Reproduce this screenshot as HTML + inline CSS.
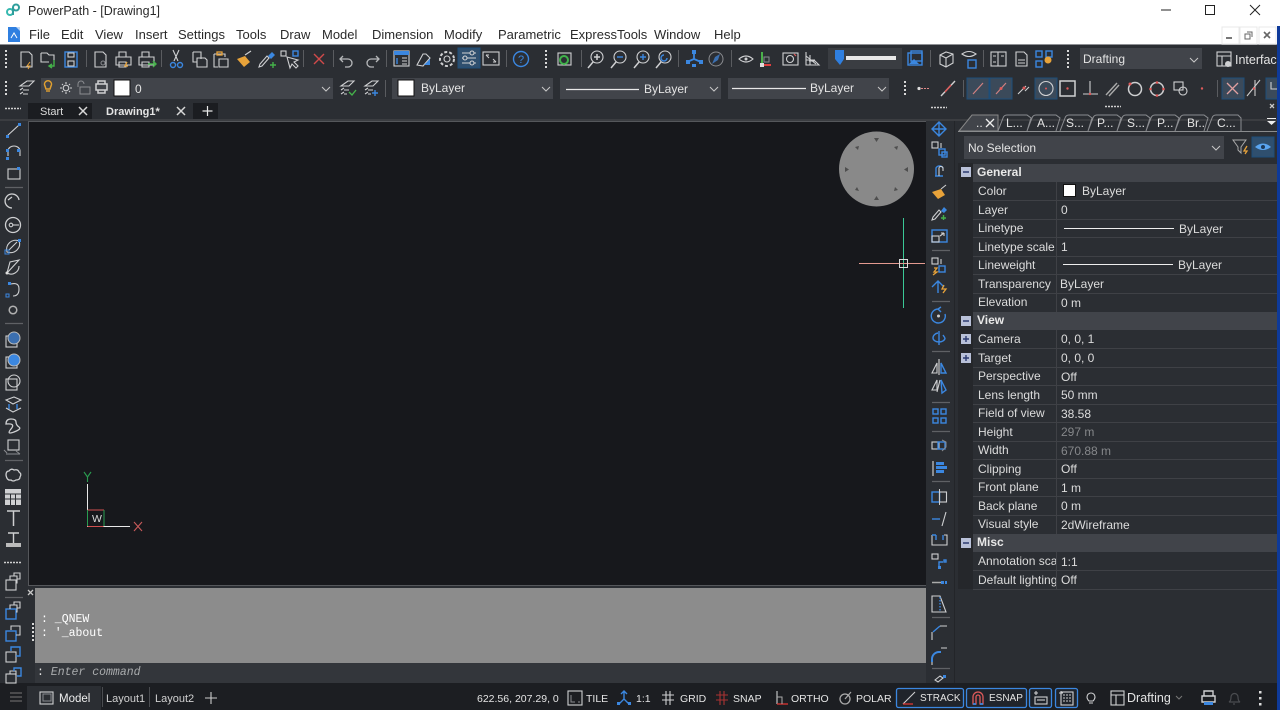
<!DOCTYPE html>
<html><head><meta charset="utf-8"><title>PowerPath</title>
<style>
*{box-sizing:border-box}
html,body{margin:0;padding:0;width:1280px;height:710px;overflow:hidden;background:#2b2e33;font-family:"Liberation Sans","Noto Sans CJK TC",sans-serif}
.a{position:absolute}
.t{position:absolute;white-space:nowrap;font-size:12px;line-height:16px;color:#e4e4e4}
.m{position:absolute;top:27px;font-size:13px;line-height:16px;color:#2a2a2a;white-space:nowrap}
.c{position:absolute;background:#41444a}
.pl{position:absolute;left:978px;margin-top:-1px;font-size:12px;line-height:16px;color:#dcdcdc;white-space:nowrap;width:78px;overflow:hidden}
.pv{position:absolute;left:1061px;font-size:12px;line-height:16px;color:#dcdcdc;white-space:nowrap}
.ph{position:absolute;left:977px;margin-top:-1px;font-size:12px;font-weight:bold;line-height:16px;color:#e8e8e8}
.s{position:absolute;top:692px;font-size:10.500px;line-height:14px;color:#e4e4e4;white-space:nowrap}
svg{position:absolute;left:0;top:0}
.l{fill:none;stroke:#cfd0d2;stroke-width:1.100}
.b{fill:none;stroke:#3b87e0;stroke-width:1.400}
.o{fill:none;stroke:#e8a33a;stroke-width:1.300}
.d{fill:none;stroke:#8a8c90;stroke-width:1}
.r{fill:none;stroke:#e05a5a;stroke-width:1.200}
.g{fill:none;stroke:#45b24a;stroke-width:1.400}
</style></head><body>
<div class="a" style="left:0;top:0;width:1280px;height:44px;background:#fff"></div>
<div class="a" style="left:0;top:44px;width:1280px;height:1px;background:#8e9094"></div>
<div class="a" style="left:0;top:45px;width:1280px;height:76px;background:#2b2e33"></div>
<div class="a" style="left:0;top:119px;width:1280px;height:2px;background:#3b3d41"></div>
<div class="a" style="left:28px;top:121px;width:898px;height:465px;background:#17181c;border:1px solid #55575b;border-right:0"></div>
<div class="a" style="left:35px;top:588px;width:891px;height:75px;background:#8c8c8c"></div>
<div class="a" style="left:35px;top:663px;width:891px;height:20px;background:#33363b"></div>
<div class="a" style="left:954px;top:121px;width:1px;height:562px;background:#232529"></div>
<div class="a" style="left:0;top:683px;width:1280px;height:27px;background:#1c1e22"></div>
<div class="a" style="left:27px;top:686px;width:74px;height:24px;background:#2b2e33"></div>
<div class="a" style="left:102px;top:687px;width:1px;height:20px;background:#4a4c50"></div>
<div class="a" style="left:149px;top:687px;width:1px;height:20px;background:#4a4c50"></div>

<!-- tabs -->
<div class="a" style="left:28px;top:103px;width:64px;height:16px;background:#1b1d21"></div>
<div class="a" style="left:193px;top:103px;width:25px;height:16px;background:#1b1d21"></div>
<div class="t" style="left:40px;top:104px;color:#dcdcdc;font-size:11px">Start</div>
<div class="t" style="left:106px;top:104px;font-weight:bold;font-size:11px;color:#e4e4e4">Drawing1*</div>

<!-- combos -->
<div class="c" style="left:41px;top:78px;width:292px;height:21px"></div>
<div class="c" style="left:392px;top:78px;width:161px;height:21px"></div>
<div class="c" style="left:560px;top:78px;width:161px;height:21px"></div>
<div class="c" style="left:728px;top:78px;width:161px;height:21px"></div>
<div class="c" style="left:1080px;top:48px;width:122px;height:21px"></div>
<div class="c" style="left:828px;top:48px;width:74px;height:21px;background:#3a3d42"></div>
<div class="c" style="left:964px;top:136px;width:260px;height:23px"></div>

<!-- title/menu text -->
<div class="t" style="left:28px;top:3px;color:#2a2a2a;font-size:12.500px">PowerPath - [Drawing1]</div>
<div class="m" style="left:29px">File</div>
<div class="m" style="left:61px">Edit</div>
<div class="m" style="left:95px">View</div>
<div class="m" style="left:135px">Insert</div>
<div class="m" style="left:178px">Settings</div>
<div class="m" style="left:236px">Tools</div>
<div class="m" style="left:280px">Draw</div>
<div class="m" style="left:322px">Model</div>
<div class="m" style="left:372px">Dimension</div>
<div class="m" style="left:444px">Modify</div>
<div class="m" style="left:498px">Parametric</div>
<div class="m" style="left:570px">ExpressTools</div>
<div class="m" style="left:654px">Window</div>
<div class="m" style="left:714px">Help</div>

<!-- toolbar text -->
<div class="t" style="left:135px;top:81px">0</div>
<div class="t" style="left:421px;top:80px">ByLayer</div>
<div class="t" style="left:644px;top:81px">ByLayer</div>
<div class="t" style="left:810px;top:80px">ByLayer</div>
<div class="t" style="left:1083px;top:51px">Drafting</div>
<div class="t" style="left:1235px;top:52px;font-size:12.500px">Interfac</div>
<div class="t" style="left:968px;top:140px">No Selection</div>

<!-- Properties panel -->
<div class="a" style="left:973px;top:163.500px;width:304px;height:18px;background:#41444a"></div>
<div class="a" style="left:973px;top:312px;width:304px;height:18px;background:#41444a"></div>
<div class="a" style="left:973px;top:534px;width:304px;height:18px;background:#41444a"></div>
<div class="a" style="left:958px;top:163px;width:15px;height:426px;background:#25272b"></div>
<div class="a" style="left:1056px;top:182px;width:1px;height:130px;background:#3f4146"></div>
<div class="a" style="left:1056px;top:330px;width:1px;height:204px;background:#3f4146"></div>
<div class="a" style="left:1056px;top:552px;width:1px;height:37px;background:#3f4146"></div>
<div class="a" style="left:973px;top:200px;width:304px;height:1px;background:#3f4146"></div>
<div class="a" style="left:973px;top:219px;width:304px;height:1px;background:#3f4146"></div>
<div class="a" style="left:973px;top:237px;width:304px;height:1px;background:#3f4146"></div>
<div class="a" style="left:973px;top:256px;width:304px;height:1px;background:#3f4146"></div>
<div class="a" style="left:973px;top:274px;width:304px;height:1px;background:#3f4146"></div>
<div class="a" style="left:973px;top:293px;width:304px;height:1px;background:#3f4146"></div>
<div class="a" style="left:973px;top:348px;width:304px;height:1px;background:#3f4146"></div>
<div class="a" style="left:973px;top:367px;width:304px;height:1px;background:#3f4146"></div>
<div class="a" style="left:973px;top:385px;width:304px;height:1px;background:#3f4146"></div>
<div class="a" style="left:973px;top:404px;width:304px;height:1px;background:#3f4146"></div>
<div class="a" style="left:973px;top:422px;width:304px;height:1px;background:#3f4146"></div>
<div class="a" style="left:973px;top:441px;width:304px;height:1px;background:#3f4146"></div>
<div class="a" style="left:973px;top:459px;width:304px;height:1px;background:#3f4146"></div>
<div class="a" style="left:973px;top:478px;width:304px;height:1px;background:#3f4146"></div>
<div class="a" style="left:973px;top:496px;width:304px;height:1px;background:#3f4146"></div>
<div class="a" style="left:973px;top:515px;width:304px;height:1px;background:#3f4146"></div>
<div class="a" style="left:973px;top:570px;width:304px;height:1px;background:#3f4146"></div>
<div class="a" style="left:973px;top:589px;width:304px;height:1px;background:#3f4146"></div>

<div class="ph" style="top:165px">General</div>
<div class="pl" style="top:184px">Color</div><div class="pv" style="left:1082px;top:183px">ByLayer</div>
<div class="pl" style="top:203px">Layer</div><div class="pv" style="top:202px">0</div>
<div class="pl" style="top:221px">Linetype</div><div class="pv" style="left:1179px;top:221px">ByLayer</div>
<div class="pl" style="top:240px">Linetype scale</div><div class="pv" style="top:239px">1</div>
<div class="pl" style="top:258px">Lineweight</div><div class="pv" style="left:1178px;top:257px">ByLayer</div>
<div class="pl" style="top:277px">Transparency</div><div class="pv" style="left:1060px;top:276px">ByLayer</div>
<div class="pl" style="top:295px">Elevation</div><div class="pv" style="left:1061px;top:295px">0 m</div>
<div class="ph" style="top:313px">View</div>
<div class="pl" style="top:332px">Camera</div><div class="pv" style="top:331px">0, 0, 1</div>
<div class="pl" style="top:351px">Target</div><div class="pv" style="top:350px">0, 0, 0</div>
<div class="pl" style="top:369px">Perspective</div><div class="pv" style="top:369px">Off</div>
<div class="pl" style="top:388px">Lens length</div><div class="pv" style="top:387px">50 mm</div>
<div class="pl" style="top:406px">Field of view</div><div class="pv" style="top:406px">38.58</div>
<div class="pl" style="top:425px">Height</div><div class="pv" style="top:424px;color:#85878a">297 m</div>
<div class="pl" style="top:443px">Width</div><div class="pv" style="top:443px;color:#85878a">670.88 m</div>
<div class="pl" style="top:462px">Clipping</div><div class="pv" style="top:461px">Off</div>
<div class="pl" style="top:480px">Front plane</div><div class="pv" style="top:480px">1 m</div>
<div class="pl" style="top:499px">Back plane</div><div class="pv" style="top:498px">0 m</div>
<div class="pl" style="top:517px">Visual style</div><div class="pv" style="top:517px">2dWireframe</div>
<div class="ph" style="top:535px">Misc</div>
<div class="pl" style="top:554px">Annotation sca</div><div class="pv" style="top:554px">1:1</div>
<div class="pl" style="top:573px">Default lighting</div><div class="pv" style="top:572px">Off</div>

<!-- command text -->
<div class="t" style="left:41px;top:612px;font:11.500px/16px 'Liberation Mono',monospace;color:#fff">: _QNEW</div>
<div class="t" style="left:41px;top:626px;font:11.500px/16px 'Liberation Mono',monospace;color:#fff">: '_about</div>
<div class="t" style="left:37px;top:665px;font:italic 11.500px/16px 'Liberation Mono',monospace;color:#a9abad"><span style="font-style:normal;color:#e0e0e0">:</span> Enter command</div>

<!-- status text -->
<div class="s" style="left:59px;font-size:11.500px;color:#eee">Model</div>
<div class="s" style="left:106px;font-size:11px;color:#d0d0d0">Layout1</div>
<div class="s" style="left:155px;font-size:11px;color:#d0d0d0">Layout2</div>
<div class="s" style="left:477px;font-size:10.500px">622.56, 207.29, 0</div>
<div class="s" style="left:586px">TILE</div>
<div class="s" style="left:636px">1:1</div>
<div class="s" style="left:680px">GRID</div>
<div class="s" style="left:733px">SNAP</div>
<div class="s" style="left:791px">ORTHO</div>
<div class="s" style="left:856px">POLAR</div>
<div class="s" style="left:1127px;font-size:12.500px;top:691px">Drafting</div>

<svg width="1280" height="710" viewBox="0 0 1280 710">
<!-- logo -->
<circle cx="10" cy="12" r="3" fill="none" stroke="#37b9b0" stroke-width="2"/>
<circle cx="16" cy="7.500" r="3" fill="none" stroke="#2f9e9c" stroke-width="2"/>
<path d="M13 7v8" stroke="#2f9e9c" stroke-width="2"/>
<!-- window buttons -->
<path d="M1161 10h10" stroke="#222" stroke-width="1"/>
<rect x="1205.500" y="5.500" width="9" height="9" fill="none" stroke="#222"/>
<path d="M1250 5l10 10M1260 5l-10 10" stroke="#222"/>
<rect x="1222" y="27" width="17" height="17" fill="#fff" stroke="#e8e8e8"/>
<rect x="1240" y="27" width="17" height="17" fill="#fff" stroke="#e8e8e8"/>
<rect x="1259" y="27" width="17" height="17" fill="#fff" stroke="#e8e8e8"/>
<path d="M1226 38h6" stroke="#777" stroke-width="2"/>
<rect x="1245" y="34" width="5" height="5" fill="none" stroke="#666"/><path d="M1247 32h5v5" fill="none" stroke="#666"/>
<path d="M1264 32l6 6M1270 32l-6 6" stroke="#666" stroke-width="1.600"/>
<!-- doc icon -->
<rect x="8" y="27" width="12" height="15" fill="#2f7fe0"/><path d="M16 27h4v4z" fill="#bcd6f5"/>
<path d="M11 38l3-5 3 5" fill="none" stroke="#fff"/>

<!-- grips -->
<g fill="#d8d8d8">
<rect x="5" y="50" width="2" height="2"/><rect x="5" y="54" width="2" height="2"/><rect x="5" y="58" width="2" height="2"/><rect x="5" y="62" width="2" height="2"/><rect x="5" y="66" width="2" height="2"/>
<rect x="5" y="81" width="2" height="2"/><rect x="5" y="85" width="2" height="2"/><rect x="5" y="89" width="2" height="2"/><rect x="5" y="93" width="2" height="2"/>
<rect x="545" y="50" width="2" height="2"/><rect x="545" y="54" width="2" height="2"/><rect x="545" y="58" width="2" height="2"/><rect x="545" y="62" width="2" height="2"/><rect x="545" y="66" width="2" height="2"/>
<rect x="1067" y="50" width="2" height="2"/><rect x="1067" y="54" width="2" height="2"/><rect x="1067" y="58" width="2" height="2"/><rect x="1067" y="62" width="2" height="2"/><rect x="1067" y="66" width="2" height="2"/>
<rect x="904" y="81" width="2" height="2"/><rect x="904" y="85" width="2" height="2"/><rect x="904" y="89" width="2" height="2"/><rect x="904" y="93" width="2" height="2"/>
<rect x="32" y="623" width="2" height="2"/><rect x="32" y="627" width="2" height="2"/><rect x="32" y="631" width="2" height="2"/><rect x="32" y="635" width="2" height="2"/><rect x="32" y="639" width="2" height="2"/>
</g>
<path d="M5 108.500h16M931 107.500h16M1105 106.500h16M4 562.500h17" stroke="#d0d0d0" stroke-width="1.500" stroke-dasharray="2 1"/>
<path d="M28 590l5 5M33 590l-5 5M1270 104l4 4M1274 104l-4 4" stroke="#c8c8c8" stroke-width="1.300"/>

<!-- toolbar separators -->
<path d="M86.500 50v17M161.500 50v17M303.500 50v17M333.500 50v17M386.500 50v17M506.500 50v17M581.500 50v17M678.500 50v17M731.500 50v17M930.500 50v17M983.500 50v17M385.500 80v17M963.500 80v17M1217.500 80v17" stroke="#5a5c60" stroke-width="1"/>

<!-- row1 icons -->
<g>
<path class="l" d="M21 52h8l3 3v12H21z"/><path d="M30 62l-3 4h3l-2 3" stroke="#e8a33a" fill="none"/>
<path class="l" d="M41 53h6l2 2h5v5M41 53v9h8"/><path class="g" d="M54 60v6h-4m2 2l-3-2 3-2"/>
<rect class="b" x="65" y="52" width="12" height="15"/><rect class="l" x="68" y="53" width="6" height="4"/><rect class="l" x="68" y="61" width="6" height="5"/>
<path class="l" d="M95 52h8l3 3v12H95z"/><circle class="d" cx="103" cy="63" r="2"/>
<path class="l" d="M119 52h7v5h-7zM116 57h15v8h-15zM119 62h7v5h-7z"/><path d="M127 62l-2 4h3" class="o"/>
<path class="l" d="M142 52h7v5h-7zM139 57h15v8h-15zM142 62h7v5h-7z"/><path class="g" d="M148 64h8m-3-3l3 3-3 3"/>
<path class="l" d="M173 50l5 11M179 50l-5 11"/><circle class="b" cx="173" cy="65" r="2.500"/><circle class="b" cx="180" cy="65" r="2.500"/>
<path class="l" d="M193 52h8v7M193 52v10h4M197 58h8l2 2v7h-10z"/>
<path class="l" d="M214 54h11v3M214 54v13h4M219 59h9v8h-9z"/><rect class="o" x="217" y="52" width="5" height="3"/>
<path d="M237 59l8-3 5 6-6 5z" fill="#e8a33a"/><path class="l" d="M245 55l6-4"/>
<path class="l" d="M259 67l3-1 7-8-2-2-7 8z"/><path d="M268 56l4-4 3 3-4 4z" fill="#3b87e0"/><path class="g" d="M270 65h6M273 62v6"/>
<rect class="l" x="281" y="51" width="5" height="5"/><rect class="b" x="293" y="51" width="5" height="5"/><path class="l" d="M287 57l3 11 2-4 4 4 2-2-4-4 4-2z"/>
<path d="M314 54l10 10M324 54l-10 10" stroke="#d04a4a" stroke-width="1.400" fill="none"/>
<path class="d" d="M343 56l-3 3 3 3M340 59h8a4 4 0 0 1 0 8h-3" style="stroke:#b6b8ba;stroke-width:1.300"/>
<path style="stroke:#b6b8ba;stroke-width:1.300" class="d" d="M376 56l3 3-3 3M379 59h-8a4 4 0 0 0 0 8h3"/>
<rect class="l" x="394" y="51" width="15" height="15"/><rect x="394" y="51" width="15" height="4" fill="#3b87e0"/><path class="b" d="M397 58v6"/><path class="l" d="M402 58h5M402 61h5M402 64h5"/>
<path class="l" d="M417 65l6-11h3l4 4-7 8z"/><path d="M424 65l6-6v6z" fill="#3b87e0"/>
<circle class="l" cx="447" cy="59" r="3"/><circle class="l" cx="447" cy="59" r="7" stroke-dasharray="3 2" style="stroke-width:2"/>
<rect x="458" y="48" width="22" height="20" fill="#2f4f6e" stroke="#1d4e7a"/><path class="l" d="M462 53h14M462 58h14M462 63h14"/><circle class="l" cx="472" cy="53" r="2" style="fill:#2f4f6e"/><circle class="l" cx="465" cy="58" r="2" style="fill:#2f4f6e"/><circle class="l" cx="472" cy="63" r="2" style="fill:#2f4f6e"/>
<rect class="l" x="483" y="52" width="16" height="13"/><path class="d" d="M486 55l3 3M486 55h3M496 62l-3-3M496 62h-3" style="stroke:#cfd0d2"/>
<circle class="b" cx="521" cy="59" r="7.500"/><text x="518" y="63" font-size="11" fill="#3b87e0" font-family="Liberation Sans">?</text>
<rect class="l" x="558" y="53" width="13" height="12"/><circle cx="564" cy="60" r="4" fill="none" stroke="#3fb24a" stroke-width="2"/>
<circle class="l" cx="597" cy="57" r="6"/><path class="l" d="M593 62l-5 6M594 57h6M597 54v6" style="stroke-width:1.500"/>
<circle class="l" cx="620" cy="57" r="6"/><path class="l" d="M616 62l-5 6" style="stroke-width:1.500"/><path class="b" d="M617 57h6"/>
<circle class="l" cx="643" cy="57" r="6"/><path class="l" d="M639 62l-5 6" style="stroke-width:1.500"/><path class="b" d="M640 57h6M643 54v6"/>
<circle class="l" cx="665" cy="57" r="6"/><path class="l" d="M661 62l-5 6" style="stroke-width:1.500"/><path class="b" d="M664 55a3 3 0 1 0 3 3"/>
<path class="b" d="M694 52v7l-7 3M694 59l7 3" style="stroke-width:1.800"/><rect x="692" y="50" width="4" height="4" fill="#3b87e0"/><rect x="686" y="60" width="4" height="4" fill="#3b87e0"/><rect x="699" y="60" width="4" height="4" fill="#3b87e0"/><rect x="692" y="64" width="4" height="3" fill="#3b87e0"/>
<circle class="d" cx="716" cy="59" r="7"/><path d="M712 64l3-7 5-3-2 6z" fill="#3b6fb0"/>
<path class="l" d="M739 59q7-6 14 0q-7 6-14 0z"/><circle cx="746" cy="59" r="1.500" fill="#cfd0d2"/>
<path d="M762 52v13" stroke="#4ab04a" stroke-width="2"/><path d="M762 65h9" stroke="#e04040" stroke-width="2"/><rect x="760" y="63" width="4" height="4" fill="#ddd"/><rect class="d" x="764" y="57" width="5" height="5"/>
<rect class="l" x="783" y="53" width="15" height="12"/><circle class="l" cx="790" cy="59" r="3.500"/><path class="r" d="M794 54l2 2"/>
<path class="l" d="M806 52v13h13l-4-4h-6M806 56l10 8M806 60h9M810 55v10"/>
<!-- slider -->
<path d="M835 50h9v9l-4 6-5-6z" fill="#2f7fe0"/><rect x="846" y="56" width="50" height="4" fill="#e8e8e8"/>
<rect class="b" x="908" y="53" width="14" height="12"/><rect class="b" x="911" y="51" width="11" height="10"/><path d="M909 64l5-5 5 5z" fill="#3b87e0"/>
<path class="l" d="M940 55l6-3 7 2v9l-7 4-6-3zM940 55l6 3 7-4M946 58v9"/>
<path class="l" d="M962 54q7-5 14 0q-7 5-14 0z"/><rect class="b" x="968" y="60" width="8" height="8"/>
<rect class="l" x="991" y="52" width="15" height="14"/><path class="l" d="M998 52v14M993 56h3M993 62h3M1001 56h3"/>
<path class="l" d="M1016 52h8l3 3v11h-11z M1018 60h7M1018 63h7"/>
<rect class="b" x="1036" y="51" width="6" height="6"/><rect class="b" x="1046" y="51" width="6" height="6"/><rect class="b" x="1036" y="61" width="6" height="6"/><circle cx="1048" cy="60" r="3.500" fill="#e8a33a"/>
<rect class="l" x="1217" y="52" width="14" height="14"/><path class="l" d="M1217 56h14M1222 56v10"/><circle cx="1228" cy="64" r="3" fill="#cfd0d2"/>

<!-- row2 icons -->
<path class="l" d="M20 86l7-5h7l-5 5zM20 90l3-2M20 94l3-2M23 90h6M23 94h5"/>
<path d="M45 86a3.500 3.500 0 1 1 6 0l-1 3h-4z" fill="none" stroke="#e0a030" stroke-width="1.500"/><path d="M46 91h4" stroke="#e0a030" stroke-width="1.400"/>
<circle class="l" cx="66" cy="88" r="2.800"/><path class="l" d="M66 82v2M66 92v2M60 88h2M70 88h2M62 84l1 1M69 91l1 1M62 92l1-1M69 85l1-1"/>
<rect class="d" x="80" y="87" width="10" height="7"/><path class="d" d="M78 87v-3a3 3 0 0 1 6 0"/>
<path class="l" d="M98 84v-3h7v3M96 84h11v6H96zM98 90h7v3h-7z" style="stroke-width:1.500"/>
<rect x="114" y="80" width="16" height="16" fill="#fff" stroke="#111"/>
<rect x="398" y="80" width="16" height="16" fill="#fff" stroke="#111"/>
<path class="d" style="stroke:#c8c8c8" d="M322 87l4 4 4-4M542 87l4 4 4-4M710 87l4 4 4-4M878 87l4 4 4-4M1190 58l4 4 4-4M1212 146l4 4 4-4"/>
<path d="M566 89.500h73M732 88.500h74" stroke="#e8e8e8" stroke-width="1.300"/>
<path class="l" d="M341 86l7-5h6l-5 5zM341 90l3-2M341 94l3-2M344 90h5M344 94h3"/><path class="g" d="M349 92l3 3 4-5"/>
<path class="l" d="M365 86l7-5h6l-5 5zM365 90l3-2M365 94l3-2M368 90h5M368 94h3"/><path class="b" d="M372 93h6M375 90v6"/>
<circle cx="919" cy="88.500" r="1.600" fill="#ddd"/><path d="M921 88.500h8" stroke="#d88" stroke-dasharray="2 1"/>
<path d="M941 96l14-15" stroke="#d0d0d0" stroke-width="1.400"/><path d="M945 92l6-7" stroke="#e05a5a" stroke-width="1.400"/>
<rect x="967" y="78" width="22" height="21" fill="#3b4a5a" stroke="#1d4e7a"/><rect x="990" y="78" width="22" height="21" fill="#3b4a5a" stroke="#1d4e7a"/>
<path d="M973 94l10-11M996 94l10-11" stroke="#d08080" stroke-width="1.200"/><circle cx="1001" cy="88.500" r="1.500" fill="#e05a5a"/>
<path d="M1018 94l8-8M1029 87l-4 4" class="l"/><circle cx="1024" cy="88" r="1.500" fill="#e05a5a"/>
<rect x="1035" y="78" width="22" height="21" fill="#3b4a5a" stroke="#1d4e7a"/><circle class="l" cx="1046" cy="88.500" r="7"/><circle cx="1046" cy="88.500" r="1" fill="#e05a5a"/>
<rect class="l" x="1060" y="81" width="15" height="15" style="stroke-width:1.500"/><circle cx="1067.500" cy="88.500" r="1.200" fill="#e05a5a"/>
<path class="l" d="M1090 81v13M1083 94h15"/><circle cx="1090" cy="94" r="1.200" fill="#e05a5a"/>
<path class="d" d="M1106 95l11-12M1109 96l10-11" style="stroke:#aaa;stroke-width:1.400"/>
<circle class="l" cx="1135" cy="89" r="6.500" style="stroke-width:1.500"/><circle cx="1130" cy="84" r="1.500" fill="#e05a5a"/>
<circle class="l" cx="1157" cy="89" r="6.500" style="stroke-width:1.500"/><circle cx="1157" cy="82.500" r="1.300" fill="#e05a5a"/><circle cx="1157" cy="95.500" r="1.300" fill="#e05a5a"/><circle cx="1150.500" cy="89" r="1.300" fill="#e05a5a"/><circle cx="1163.500" cy="89" r="1.300" fill="#e05a5a"/>
<rect class="l" x="1174" y="82" width="9" height="8"/><circle class="l" cx="1183" cy="91" r="4"/>
<circle cx="1202" cy="88.500" r="1.200" fill="#e05a5a"/>
<rect x="1222" y="78" width="22" height="21" fill="#3b4a5a" stroke="#1d4e7a"/><path d="M1227 83l11 11M1238 83l-11 11" stroke="#e0a0a0" stroke-width="1.300"/>
<path class="l" d="M1247 96l13-16M1255 80v16" style="stroke:#ccc"/><circle cx="1254" cy="88.500" r="1.200" fill="#e05a5a"/>
<rect x="1266" y="78" width="14" height="21" fill="#3b4a5a" stroke="#1d4e7a"/><path class="l" d="M1271 82v7h9"/>

<!-- tab marks -->
<path d="M79 107l8 8M87 107l-8 8M177 107l8 8M185 107l-8 8" stroke="#d8d8d8" stroke-width="1.500"/>
<path d="M202.500 111h10M207.500 106v10" stroke="#e8e8e8" stroke-width="1.200"/>

<!-- nav wheel -->
<circle cx="876.500" cy="169" r="37.500" fill="#898989"/>
<g fill="#4e4e4e"><path d="M874 138h5l-2.500 4zM855 147l4-1-1 4zM898 146l-1 4-3-3zM845 167v5l4-2.500zM908 167v5l-4-2.500zM855 190l4 1-2-4zM898 190l-4 1 1-4zM874 200h5l-2.500-4z"/></g>
<!-- crosshair -->
<path d="M903.500 218v90" stroke="#3ac896" stroke-width="1"/>
<path d="M859 263.500h66" stroke="#e49a90" stroke-width="1"/>
<rect x="899.500" y="259.500" width="8" height="8" fill="none" stroke="#ddd"/>
<!-- UCS -->
<path d="M87.500 484v42.500H130" fill="none" stroke="#e8e8e8" stroke-width="1"/>
<path d="M87.500 510h16.500M87.500 526.500h16" stroke="#d05050"/><path d="M87.500 510v16M104 510v16" stroke="#2a9c50"/>
<path d="M84 472l3.500 5 3.500-5M87.500 477v5" fill="none" stroke="#2a9c50" stroke-width="1.100"/>
<path d="M134 522l8 9M142 522l-8 9" stroke="#c85a5a" stroke-width="1.100"/>
<text x="92" y="522" font-size="10.500" fill="#ddd" font-family="Liberation Sans">W</text>

<!-- left toolbar -->
<path d="M7 136l12-11" class="l"/><rect x="6" y="135" width="3" height="3" fill="#3b87e0"/><rect x="18" y="123" width="3" height="3" fill="#3b87e0"/>
<path d="M8 156v-5a6 5 0 0 1 12 0v5" class="l"/><rect x="6" y="149" width="3" height="3" fill="#3b87e0"/><rect x="6" y="157" width="3" height="3" fill="#3b87e0"/><rect x="17" y="149" width="3" height="3" fill="#3b87e0"/>
<rect class="l" x="8" y="169" width="12" height="10"/><rect x="17" y="167" width="3" height="3" fill="#3b87e0"/>
<path d="M5 187.500h18M5 323.500h18M5 460.500h18M5 597.500h18M932 250.500h18M932 301.500h18M932 351.500h18M932 402.500h18M932 431.500h18M932 481.500h18M932 617.500h18M932 668.500h18" stroke="#5f6165" stroke-width="1.200"/>
<path class="l" d="M12 208a7 7 0 1 1 7-8M12 197l-4 3" style="stroke-width:1.300"/>
<circle class="l" cx="13" cy="225" r="7.500" style="stroke-width:1.300"/><circle class="l" cx="11" cy="225" r="1.800"/><path class="l" d="M13 225h6"/>
<path class="l" d="M7 252a9 9 0 0 1 12-11q2 5-2 9t-10 2z"/><path class="l" d="M9 250l8-8"/><rect x="5" y="250" width="4" height="4" fill="none" stroke="#3b87e0"/><rect x="18" y="239" width="3" height="3" fill="#3b87e0"/>
<path class="l" d="M7 273l3-11 9-2-12 13a8 8 0 0 0 12-7"/><circle cx="7" cy="273" r="1.500" fill="#ddd"/>
<path class="l" d="M11 284q8-2 8 5t-6 7"/><rect x="8" y="282" width="3" height="3" fill="#3b87e0"/><rect x="6" y="294" width="3" height="3" fill="none" stroke="#3b87e0"/>
<circle class="d" cx="13" cy="310" r="3.800" style="stroke:#b0b0b0;stroke-width:1.500"/>
<rect class="l" x="6" y="336" width="11" height="11"/><circle cx="14" cy="338" r="6" fill="#3b6fb0" stroke="#bbb"/>
<rect class="l" x="6" y="357" width="11" height="11"/><circle cx="14" cy="360" r="6" fill="#3b87e0" stroke="#bbb"/>
<rect class="l" x="6" y="379" width="11" height="11"/><circle class="l" cx="14" cy="381" r="6"/>
<path class="l" d="M6 400l8-3 7 3-8 4zM6 408l7 4 8-4"/><path class="b" d="M9 404v5M17 404v5"/>
<path class="l" d="M6 424q0-5 5-5t5 3 3 5-5 5-3-3-5-5z" style="stroke-width:1.300"/>
<rect class="l" x="8" y="440" width="11" height="10"/><path class="d" d="M6 454h14M4 450l3 3M16 451l4 3"/>
<path class="l" d="M6 475q0-4 3-4 2-3 5-1 4-1 5 2 3 2 1 5 0 3-4 3-3 2-5 0-4 1-5-5z" style="stroke-width:1.300"/>
<rect x="5" y="489" width="16" height="16" fill="#cfd0d2"/><path d="M5 494h16M5 499h16M10.500 494v11M15.500 494v11" stroke="#2b2e33" stroke-width="1"/>
<path class="l" d="M7 511h13M13.500 511v15" style="stroke-width:1.500"/>
<path class="l" d="M8 533h11M13.500 533v10" style="stroke-width:1.400"/><rect x="6" y="543" width="15" height="4" fill="#bbb"/>
<g><rect class="l" x="6" y="580" width="10" height="10"/><path class="l" d="M10 580v-4h7v7h-1M14 576v-3h6v6h-3"/></g>
<g><rect x="6" y="609" width="10" height="10" class="b"/><path class="l" d="M10 609v-4h7v7h-1M14 605v-3h6v6h-3"/></g>
<g><rect x="6" y="631" width="10" height="10" class="b"/><path class="l" d="M11 630v-4h9v9h-4"/></g>
<g><rect x="6" y="652" width="10" height="10" class="l"/><path class="b" d="M11 651v-4h9v9h-4"/></g>
<g><rect x="6" y="674" width="10" height="9" class="l"/><path class="l" d="M10 674v-3h6v5"/><path class="b" d="M14 671v-3h7v8h-4"/></g>

<!-- right toolbar -->
<g fill="none">
<path class="b" d="M939 122l7 7-7 7-7-7zM939 122v14M932 129h14M937 124l2-2 2 2M937 134l2 2 2-2M934 127l-2 2 2 2M944 127l2 2-2 2"/>
<rect class="l" x="932" y="142" width="6" height="6"/><rect class="b" x="939" y="149" width="6" height="6"/><rect class="b" x="942" y="152" width="5" height="5"/><path class="l" d="M941 143v5"/>
<path class="b" d="M935 176h8M936 176v-8a4 4 0 0 1 7 0"/><path class="l" d="M939 176v-7a2 2 0 0 1 4-1v3"/>
<path d="M932 192l9-3 4 6-7 4z" fill="#e8a33a"/><path class="l" d="M941 189l5-4"/>
<path class="l" d="M932 220l3-1 6-7-2-2-6 7z"/><path d="M941 211l3-4 3 3-3 3z" fill="#3b87e0"/><path class="g" d="M941 218h5M943.500 215v5"/>
<rect class="b" x="932" y="230" width="15" height="12"/><rect class="l" x="932" y="236" width="7" height="6"/><path class="l" d="M940 236l4-3M944 233h-3M944 233v3"/>
<rect class="l" x="932" y="258" width="6" height="6"/><rect class="b" x="939" y="266" width="6" height="6"/><path d="M934 268l3 0-3 4h3l-4 3" class="o"/><path class="l" d="M941 259v5"/>
<path class="b" d="M932 287l6-6 6 6M938 281v12"/><path d="M944 285l-2 4h4l-3 4" class="o"/>
<path class="b" d="M945 314a7 7 0 1 1-7-5m3-2l-3 2 3 3"/><circle cx="938.500" cy="316" r="1.500" fill="#ccc"/>
<path class="b" d="M939 331v14M933 338a6 4 0 0 0 12 0"/><path class="b" d="M933 338a6 5 0 0 1 5-5"/><path class="b" d="M945 338l-2-3"/>
<path d="M939 359v16" stroke="#ccc" stroke-width="1.200"/><path class="l" d="M937 363l-5 10h5z"/><path class="b" d="M941 363l5 10h-5z"/>
<path class="l" d="M937 380l-5 10h5zM940 380l-3 12"/><path class="b" d="M941 380l5 10-4 3z"/>
<rect class="b" x="933" y="409" width="5" height="5"/><rect class="b" x="941" y="409" width="5" height="5"/><rect class="b" x="933" y="418" width="5" height="5"/><rect class="b" x="941" y="418" width="5" height="5"/>
<rect class="l" x="932" y="442" width="7" height="7"/><rect class="b" x="938" y="442" width="7" height="7"/><path class="d" d="M942 440l4 2v5l-4 4"/>
<path d="M933 461v15" stroke="#ccc" stroke-width="1.200"/><path d="M936 462h8v3h-8zM936 466h11v3h-11zM936 470h8v3h-8z" fill="#3b87e0"/>
<rect class="b" x="932" y="492" width="7.500" height="10"/><rect class="l" x="939.500" y="492" width="7" height="10"/><path d="M939.500 489v16" stroke="#ccc"/>
<path class="b" d="M932 519h8"/><path class="l" d="M942 526l4-14"/>
<path class="l" d="M932 535v10h15v-10h-3"/><path class="b" d="M936 535v5M943 535v5M932 535h4"/>
<rect class="l" x="932" y="554" width="6" height="5"/><path class="b" d="M939 567v-5h4"/><rect x="938" y="566" width="3" height="3" fill="#3b87e0"/><rect class="b" x="944" y="560" width="2" height="2"/>
<path d="M932 582.500h9" stroke="#aaa" stroke-width="1.500"/><rect x="941" y="581" width="3" height="3" fill="#3b87e0"/><rect x="945" y="581" width="2" height="3" fill="#3b87e0"/>
<path class="l" d="M932 612v-16h8l6 16z"/><path class="b" d="M940 597v15" stroke-dasharray="1.500 1.500"/>
<path class="b" d="M933 632l7-6"/><path class="l" d="M940 626h7M932 632v8"/>
<path class="b" d="M932 662v-3a7 7 0 0 1 7-7h2" style="stroke-width:2"/><path class="l" d="M941 648h6M932 662v3"/>
<path class="l" d="M935 680l5-4 3 2-5 4z"/><rect x="943" y="675" width="3" height="3" fill="#3b87e0"/>
</g>

<!-- property tabs -->
<path d="M959 131l13-16h26v16z" fill="#41444a" stroke="#888" stroke-width="1"/>
<path class="d" d="M998 131l5-13q1-3 4-3h20l4 3-4 13M1027 131l5-13q1-3 4-3h20l4 3-4 13M1060 131l5-13q1-3 4-3h19l4 3-4 13M1088 131l5-13q1-3 4-3h20l4 3-4 13M1117 131l5-13q1-3 4-3h20l4 3-4 13M1146 131l5-13q1-3 4-3h20l4 3-4 13M1175 131l5-13q1-3 4-3h20l4 3-4 13M1207 131l5-13q1-3 4-3h22l3 3v13"/>
<path d="M958 131.500h319" stroke="#8a8c8e"/>
<path d="M986 119l8 8M994 119l-8 8" stroke="#eee" stroke-width="1.300"/>
<path d="M1267 121h9l-4.500 4z" fill="#eee"/><path d="M1267 118.500h9" stroke="#eee"/>
<g font-family="Liberation Sans" font-size="12" fill="#e4e4e4">
<text x="976" y="127">..</text><text x="1006" y="127">L...</text><text x="1037" y="127">A...</text><text x="1066" y="127">S...</text><text x="1097" y="127">P...</text><text x="1127" y="127">S...</text><text x="1157" y="127">P...</text><text x="1187" y="127">Br..</text><text x="1217" y="127">C...</text>
</g>
<!-- filter & eye -->
<path class="d" style="stroke:#aaa" d="M1233 140h13l-5 7v6l-3-3v-3z"/><path d="M1247 146l-3 5h3l-2 3" class="o"/>
<rect x="1252" y="137" width="22" height="20" fill="#2f4f6e" stroke="#1d4e7a"/><path d="M1255 147q8-7 16 0q-8 6-16 0z" fill="#5aa5f0"/><circle cx="1263" cy="147" r="2" fill="#1d3a5a"/>

<!-- expand boxes -->
<g fill="#b8c0d8"><rect x="961" y="167" width="10" height="10"/><rect x="961" y="316" width="10" height="10"/><rect x="961" y="538" width="10" height="10"/><rect x="961" y="334" width="10" height="10"/><rect x="961" y="353" width="10" height="10"/></g>
<path d="M963 172h6M963 321h6M963 543h6M963 339h6M966 336v6M963 358h6M966 355v6" stroke="#2c3a70" stroke-width="1.400"/>
<rect x="1063.500" y="184.500" width="12" height="12" fill="#fff" stroke="#111"/>
<path d="M1064 228.500h110M1063 264.500h110" stroke="#eee" stroke-width="1"/>

<!-- status bar icons -->
<path d="M10 693h12M10 697h12M10 701h12" stroke="#666" stroke-width="1.200"/>
<rect class="l" x="40" y="692" width="13" height="12"/><rect class="d" x="43" y="694" width="8" height="7"/>
<path d="M205 698h12M211 692v12" stroke="#ccc" stroke-width="1.100"/>
<rect class="l" x="568" y="691" width="14" height="14"/><path class="d" d="M571 695v7h4M578 702h2"/>
<path class="b" d="M624 692v7l-5 5M624 699l5 5M621 694l3-3 3 3"/><rect x="617" y="702" width="3" height="3" fill="#3b87e0"/><rect x="628" y="702" width="3" height="3" fill="#3b87e0"/>
<path class="l" d="M666 691v14M670 691v14M662 695h12M662 700h12"/>
<path d="M720 691v14M724 691v14M716 695h12M716 700h12" stroke="#a33" stroke-width="1.100" fill="none"/>
<path class="l" d="M777 691v13"/><path d="M777 704h11" stroke="#d33" stroke-width="1.300"/><path class="d" style="stroke:#aaa" d="M777 697h5v7"/>
<circle class="d" style="stroke:#aaa;stroke-width:1.300" cx="845" cy="699" r="5"/><path d="M845 699l6-7" stroke="#aaa" stroke-width="1.200"/>
<rect x="896.500" y="688.500" width="67" height="19" rx="2" fill="#20242b" stroke="#3b87e0" stroke-width="1.300"/>
<rect x="966.500" y="688.500" width="60" height="19" rx="2" fill="#20242b" stroke="#3b87e0" stroke-width="1.300"/>
<rect x="1029.500" y="688.500" width="22" height="19" rx="2" fill="#20242b" stroke="#3b87e0" stroke-width="1.300"/>
<rect x="1055.500" y="688.500" width="22" height="19" rx="2" fill="#20242b" stroke="#3b87e0" stroke-width="1.300"/>
<path class="l" d="M903 704l12-12"/><path d="M903 704h10" stroke="#d33" stroke-width="1.300"/>
<path d="M973 704v-7a5 5 0 0 1 10 0v7h-3v-7a2 2 0 0 0-4 0v7z" fill="none" stroke="#e05a5a" stroke-width="1.300"/><path d="M973 704h3M980 704h3" stroke="#3b87e0" stroke-width="1.800"/>
<path class="l" d="M1034 693h4M1036 691v4"/><rect class="l" x="1035" y="697" width="12" height="7"/><path class="l" d="M1037 700h8"/>
<path class="l" d="M1059 693h4M1061 691v4"/><rect class="l" x="1061" y="692" width="12" height="13"/><path d="M1063 695h8M1063 698h8M1063 701h8" stroke="#ccc" stroke-dasharray="2 1"/>
<path class="l" d="M1087 697a4 4 0 1 1 8 0q0 2-2 4h-4q-2-2-2-4zM1089 703h4"/>
<rect class="l" x="1111" y="691" width="13" height="14"/><path class="l" d="M1111 695h13M1116 695v10"/>
<path d="M1176 696l3 3 3-3" stroke="#777" fill="none"/>
<path class="l" d="M1204 696v-5h9v5M1202 696h13v6h-13z" style="stroke-width:1.400"/><rect x="1204" y="702" width="9" height="3" fill="#3b87e0"/>
<path d="M1229 702q2-1 2-5a3.500 3.500 0 0 1 7 0q0 4 2 5zM1233 704h2" stroke="#4a4c50" fill="none" stroke-width="1.200"/>
<g fill="#ddd"><rect x="1259" y="691" width="2.500" height="2.500"/><rect x="1259" y="697" width="2.500" height="2.500"/><rect x="1259" y="703" width="2.500" height="2.500"/></g>
</g>
</svg>
<!-- text above button fills -->
<div class="s" style="left:920px;font-size:10px">STRACK</div>
<div class="s" style="left:989px;font-size:10px">ESNAP</div>
<div class="a" style="left:1277px;top:26px;width:3px;height:684px;background:#0e3a9a"></div>
</body></html>
